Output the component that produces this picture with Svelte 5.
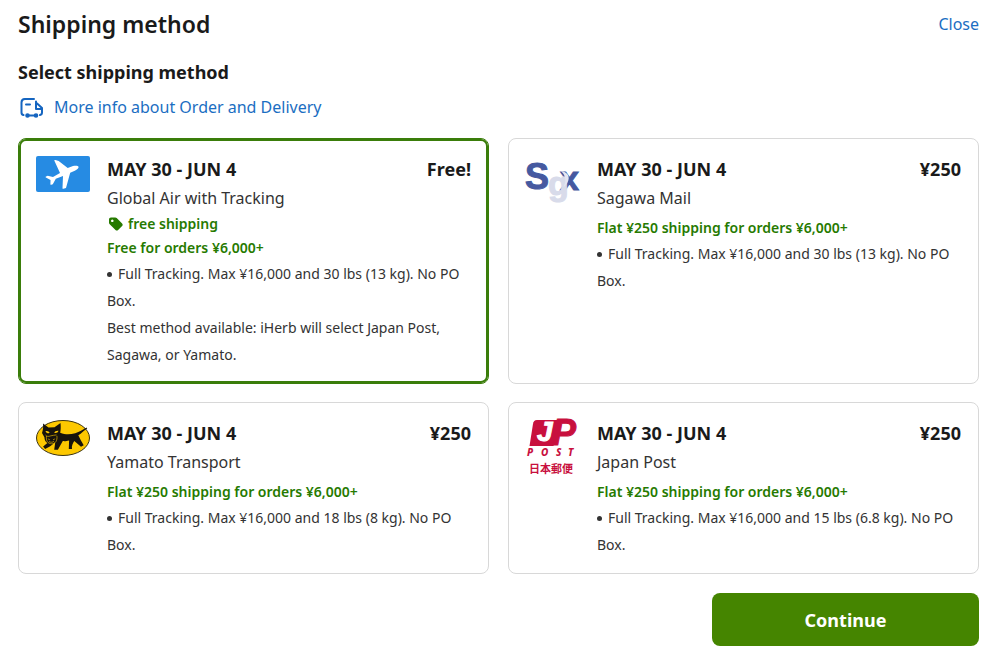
<script>
  const methods = [
    {
      id: 'global-air',
      logo: 'air',
      dates: 'MAY 30 - JUN 4',
      price: 'Free!',
      name: 'Global Air with Tracking',
      tag: 'free shipping',
      promo: 'Free for orders ¥6,000+',
      detail: 'Full Tracking. Max ¥16,000 and 30 lbs (13 kg). No PO Box.',
      note: 'Best method available: iHerb will select Japan Post, Sagawa, or Yamato.'
    },
    {
      id: 'sagawa',
      logo: 'sagawa',
      dates: 'MAY 30 - JUN 4',
      price: '¥250',
      name: 'Sagawa Mail',
      promo: 'Flat ¥250 shipping for orders ¥6,000+',
      detail: 'Full Tracking. Max ¥16,000 and 30 lbs (13 kg). No PO Box.'
    },
    {
      id: 'yamato',
      logo: 'yamato',
      dates: 'MAY 30 - JUN 4',
      price: '¥250',
      name: 'Yamato Transport',
      promo: 'Flat ¥250 shipping for orders ¥6,000+',
      detail: 'Full Tracking. Max ¥16,000 and 18 lbs (8 kg). No PO Box.'
    },
    {
      id: 'japan-post',
      logo: 'post',
      dates: 'MAY 30 - JUN 4',
      price: '¥250',
      name: 'Japan Post',
      promo: 'Flat ¥250 shipping for orders ¥6,000+',
      detail: 'Full Tracking. Max ¥16,000 and 15 lbs (6.8 kg). No PO Box.'
    }
  ];

  let selected = $state('global-air');
</script>

<main class="shipping">
  <header class="header">
    <h1>Shipping method</h1>
    <a class="close" href="#close">Close</a>
  </header>

  <h2>Select shipping method</h2>

  <a class="more-info" href="#delivery">
    <svg width="26" height="22" viewBox="0 0 26 22" fill="none" stroke="#1565c0" stroke-width="2" stroke-linecap="round" stroke-linejoin="round" aria-hidden="true">
      <path d="M5.500 19C4 18.800 3.500 18 3.500 16.500V6.500c0-2.400 1-3.500 3.300-3.500H16" />
      <path d="M18 5.500v7.500H23.500M18 6.500l6 5.500v4.500c0 1.600-.6 2.300-2 2.500" />
      <path d="M8 8.500h4M10 19.500h7" />
      <circle cx="9.500" cy="19.500" r="1.300" fill="#1565c0" />
      <circle cx="18" cy="19.500" r="1.300" fill="#1565c0" />
    </svg>
    More info about Order and Delivery
  </a>

  <div class="methods" role="radiogroup" aria-label="Select shipping method">
    {#each methods as method (method.id)}
      <label class="card" class:selected={selected === method.id}>
        <input type="radio" name="method" value={method.id} bind:group={selected} />

        <span class="logo">
          {#if method.logo === 'air'}
            <svg width="54" height="36" viewBox="0 0 54 36" aria-hidden="true">
              <rect width="54" height="36" rx="2" fill="#268be3" />
              <path fill="#fff" d="M18.500 5c-.5-.7.2-1.200.9-1l3.300.9 9 7.200 5.300-2c2.600-.8 5-.5 5.500.6.5 1.300-1.200 2.800-3.700 4l-4.600 2.100-4.200 15.200-2.600.8c-.7.200-1-.2-.9-.9l.5-11.900-7.200 2.800-3 5.500-1.500.5c-.6.200-.9-.1-.9-.6l.1-4.200-4.600-2.600c-.5-.4-.4-.8.1-1l1.700-.6 5.300 1.200 7-4z" />
            </svg>
          {:else if method.logo === 'sagawa'}
            <svg width="54" height="48" viewBox="0 0 54 48" aria-hidden="true">
              <text class="sgx" x="-1" y="33" font-size="36" fill="#4559a0" stroke="#4559a0">S</text>
              <text class="sgx" x="34" y="34" font-size="34" fill="#4559a0" stroke="#4559a0">x</text>
              <text class="sgx" x="22" y="39" font-size="34" fill="#d8dbea" stroke="#d8dbea">g</text>
              <path d="M35 15c7 1 9.500 6 6.500 11.500-1 2-2.500 3.500-4 4.500 2-4 2.500-8 1-11-.8-2-2-3.500-3.500-5z" fill="#e4e6f1" />
            </svg>
          {:else if method.logo === 'yamato'}
            <svg width="54" height="36" viewBox="0 1 54 36" aria-hidden="true">
              <ellipse cx="27" cy="19" rx="26.500" ry="17.500" fill="#fdc800" stroke="#3c3412" stroke-width="1" />
              <path fill="#17130c" d="M7 4.500l5.500 4 6-.3L24.500 4c.4 4 .3 6.500-.3 9.700 5.500 2.200 10 1.800 15 .5 4.500-1.300 7.200-3.700 11-5.500.9-.3 1.300.6.6 1.100-3.600 2.400-5.500 5-8.500 6.500 1.600 3.500 3.300 6.600 5.400 10l-2.700 1.500-6.700-5.800c-1.500 2.400-2.900 4.800-2.300 7.900h-3.200l.3-8.400c-2.700.7-4.400.9-6.300.6l-4.900 8.600h-3.700l1-7.300-5.400 4.200-4.700 2.300-2-2.400 4.300-3.600c-2-1-2.900-3-3-5.600L6 14c1-3.100 1.400-5.300 1-9.500z" />
              <path fill="#fdc800" d="M9.500 12.200c2.200-.4 3.600.4 4.200 1.900-2 .4-3.400-.1-4.200-1.900zM22.500 11.800c-2.200-.2-3.700.6-4.300 2 2 .6 3.700-.1 4.300-2zM11.500 19.200l2.300 1.200-.5.900zM19.500 19.200l-2.400 1.200.5.900z" />
              <path fill="none" stroke="#fdc800" stroke-width=".6" d="M9.500 16c1.500 1.700 3 1.700 5 .9s4-.4 6-1M10.500 17c-.6 4.500 1 7.500 5 7.800 4 .1 6-3.300 5.400-8M13 22.500c1.700 1 3.500 1 5-.2" />
            </svg>
          {:else}
            <svg width="54" height="58" viewBox="0 0 54 58" aria-hidden="true">
              <path fill="#c8103e" d="M11 0H32L27.500 26H3.500L7 4C7.500 1.500 8.500 0 11 0z" />
              <text class="jp" x="11" y="21" font-size="28" fill="#fff" stroke="#fff">J</text>
              <text class="jp" x="26" y="25" font-size="36" fill="#c8103e" stroke="#c8103e">P</text>
              <text class="post" x="1" y="36" font-size="10" fill="#c8103e">P</text>
              <text class="post" x="15" y="36" font-size="10" fill="#c8103e">O</text>
              <text class="post" x="30" y="36" font-size="10" fill="#c8103e">S</text>
              <text class="post" x="42" y="36" font-size="10" fill="#c8103e">T</text>
              <text class="kanji" x="25" y="53" font-size="11" text-anchor="middle" fill="#c8103e">日本郵便</text>
            </svg>
          {/if}
        </span>

        <span class="body">
          <span class="top">
            <span>{method.dates}</span>
            <span>{method.price}</span>
          </span>
          <span class="name">{method.name}</span>
          {#if method.tag}
            <span class="tag">
              <svg width="17" height="16" viewBox="0 0 17 16" aria-hidden="true">
                <path fill="#267a00" fill-rule="evenodd" d="M2 3.500C2 2.300 2.800 1.500 4 1.500h4.200c.6 0 1.100.2 1.500.6l5.400 5.300c.8.8.8 1.800 0 2.600l-4 4c-.8.8-1.800.8-2.600 0L2.700 8.300C2.200 7.900 2 7.400 2 6.800zM5.300 3.500a1.300 1.300 0 1 0 .01 0z" />
              </svg>
              {method.tag}
            </span>
          {/if}
          <span class="promo" class:spaced={!method.tag}>{method.promo}</span>
          <span class="detail bullet">{method.detail}</span>
          {#if method.note}
            <span class="detail">{method.note}</span>
          {/if}
        </span>
      </label>
    {/each}
  </div>

  <footer class="footer">
    <button type="button" class="continue">Continue</button>
  </footer>
</main>

<style>
  :global(body) {
    margin: 0;
    background: #fff;
  }

  .shipping {
    padding: 8px 21px 12px 18px;
    font-family: 'Noto Sans', 'Noto Sans CJK JP', sans-serif;
    color: #1a1a1a;
  }

  .header {
    display: flex;
    justify-content: space-between;
    align-items: center;
  }

  h1,
  h2 {
    margin: 0;
  }

  h1 {
    font-size: 23px;
    font-weight: 600;
    line-height: 32px;
  }

  h2 {
    margin-top: 18px;
    font-size: 18px;
    font-weight: 700;
    line-height: 28px;
  }

  a {
    color: #1b6ec2;
    text-decoration: none;
  }

  .close,
  .more-info {
    font-size: 16px;
    line-height: 24px;
  }

  .more-info {
    display: flex;
    align-items: center;
    gap: 10px;
    width: fit-content;
    margin-top: 9px;
  }

  .methods {
    display: grid;
    grid-template-columns: 1fr 1fr;
    gap: 18px 19px;
    margin-top: 19px;
  }

  .card {
    display: flex;
    gap: 17px;
    padding: 16px 17px 15px;
    border: 1px solid #d8d8d8;
    border-radius: 8px;
    cursor: pointer;
  }

  .card.selected {
    border-color: #3a7d0a;
    box-shadow: inset 0 0 0 2px #3a7d0a;
  }

  .card input {
    position: absolute;
    opacity: 0;
    pointer-events: none;
  }

  .logo {
    flex: 0 0 54px;
    padding-top: 1px;
  }

  .logo svg {
    display: block;
    overflow: visible;
  }

  .sgx,
  .jp {
    font-family: 'Liberation Sans', sans-serif;
    font-weight: 700;
    stroke-width: 1px;
  }

  .jp {
    font-style: italic;
  }

  .post {
    font-family: 'Noto Sans', sans-serif;
    font-style: italic;
    font-weight: 800;
  }

  .kanji {
    font-family: 'Noto Sans CJK JP', sans-serif;
    font-weight: 700;
  }

  .body {
    display: flex;
    flex: 1;
    flex-direction: column;
    min-width: 0;
  }

  .top {
    display: flex;
    justify-content: space-between;
    font-size: 18px;
    font-weight: 700;
    line-height: 29px;
  }

  .name {
    font-size: 16px;
    line-height: 28px;
    color: #333;
  }

  .tag,
  .promo {
    font-size: 14px;
    font-weight: 600;
    line-height: 24px;
    color: #267a00;
  }

  .tag {
    display: flex;
    align-items: center;
    gap: 4px;
  }

  .spaced {
    margin-top: 4px;
  }

  .detail {
    font-size: 14px;
    line-height: 27px;
    color: #333;
  }

  .bullet::before {
    content: '';
    display: inline-block;
    width: 5px;
    height: 5px;
    margin-right: 6px;
    border-radius: 50%;
    background: #333;
    vertical-align: 2px;
  }

  .footer {
    display: flex;
    justify-content: flex-end;
    margin-top: 19px;
  }

  .continue {
    width: 267px;
    height: 53px;
    border: 0;
    border-radius: 8px;
    background: #458500;
    color: #fff;
    font-family: inherit;
    font-size: 18px;
    font-weight: 700;
    cursor: pointer;
  }
</style>
